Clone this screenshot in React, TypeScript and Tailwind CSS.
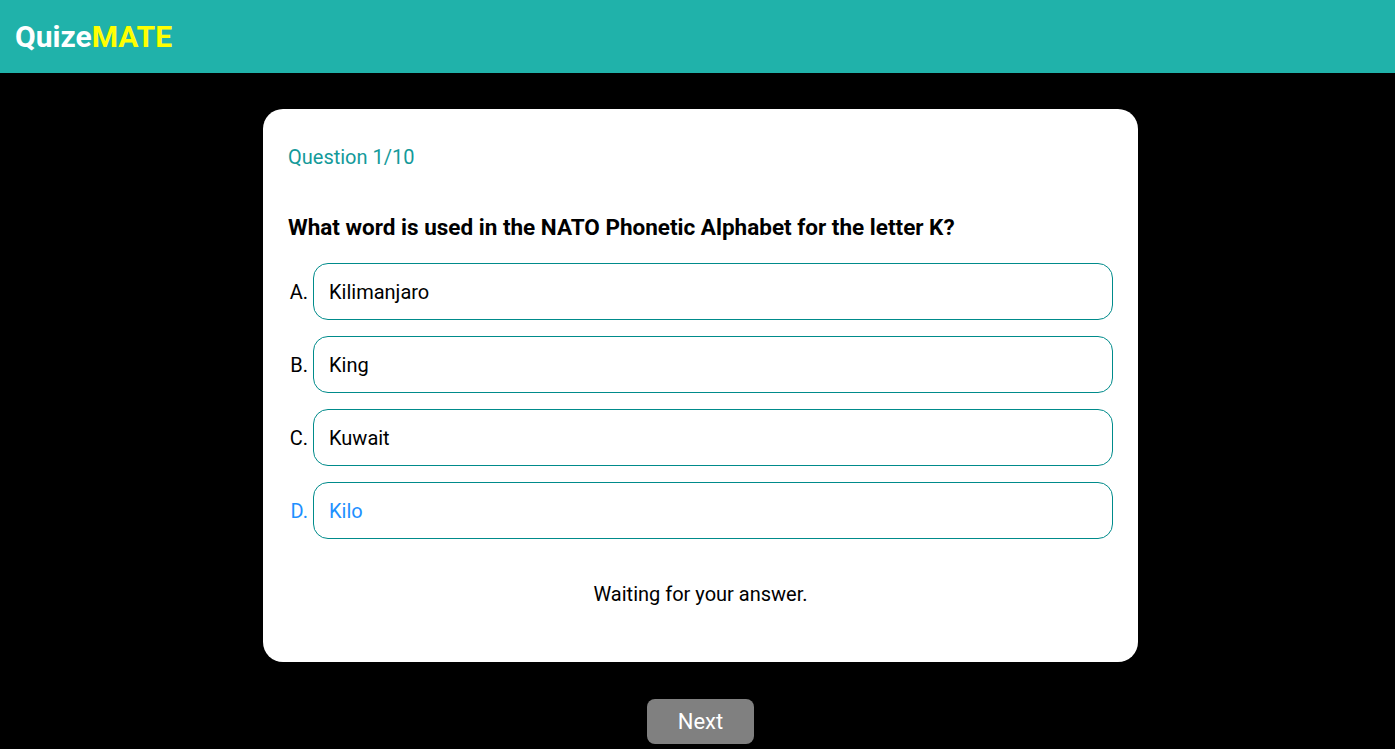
const options = [
  { key: "A", text: "Kilimanjaro" },
  { key: "B", text: "King" },
  { key: "C", text: "Kuwait" },
  { key: "D", text: "Kilo" },
];

const App = () => {
  const selected = "D";

  return (
    <div className="min-h-screen bg-black font-['Roboto',sans-serif]">
      <header className="flex h-[73px] items-center bg-[#20b2aa] px-[15px]">
        <h1 className="text-[30px] font-bold leading-none text-white">
          Quize<span className="text-[#ffff00]">MATE</span>
        </h1>
      </header>

      <main className="flex flex-col items-center pl-[6px] pt-[36px]">
        <div className="w-[875px] rounded-[20px] bg-white px-[25px] pb-[53px] pt-[23px]">
          <p className="text-[20px] leading-[50px] text-[#139a9a]">Question 1/10</p>
          <h2 className="mt-[20px] text-[22.5px] font-bold leading-[50px] text-black">
            What word is used in the NATO Phonetic Alphabet for the letter K?
          </h2>
          <div className="mt-[11px] flex flex-col gap-[16px]">
            {options.map((opt) => {
              const active = opt.key === selected;
              return (
                <div
                  key={opt.key}
                  className={`flex items-center gap-[5px] text-[20px] ${
                    active ? "text-[#1e90ff]" : "text-black"
                  }`}
                >
                  <span className="w-[20px] text-right">{opt.key}.</span>
                  <div className="flex h-[57px] flex-1 items-center rounded-[15px] border border-[#008b8b] px-[15px]">
                    {opt.text}
                  </div>
                </div>
              );
            })}
          </div>
          <p className="mt-[40px] text-center text-[20px] leading-[30px] text-black">
            Waiting for your answer.
          </p>
        </div>

        <button className="mt-[37px] h-[45px] w-[107px] rounded-[8px] bg-[#808080] text-[22px] text-white">
          Next
        </button>
      </main>
    </div>
  );
};

export default App;
